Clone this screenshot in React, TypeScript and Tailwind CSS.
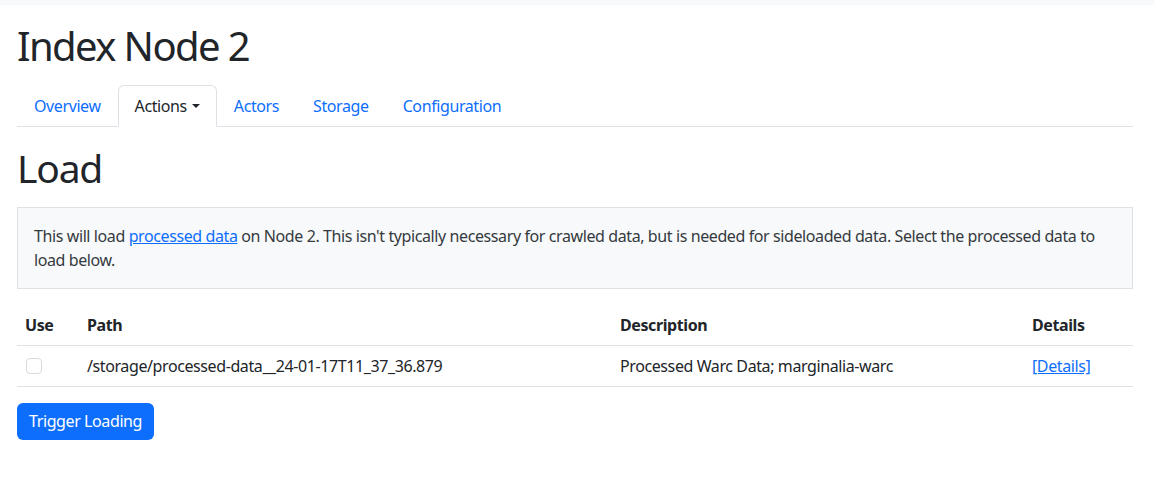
import React from "react";

export default function App() {
  const font = { fontFamily: '"Noto Sans", "Open Sans", sans-serif' };
  return (
    <div className="min-h-[479px] bg-white text-[#212529] tracking-[-0.4px]" style={font}>
      <div className="h-[5px] bg-[#f8f9fa]" />
      <div className="pl-[17px] pr-[21px]">
        <h1 className="mt-[17px] text-[40px] leading-[48px] font-normal tracking-[-1.6px]">Index Node 2</h1>
        <nav className="mt-[15px] flex border-b border-[#dee2e6] text-[16px] leading-6">
          <a className="px-4 py-2 text-[#0d6efd] border border-transparent -mb-px">Overview</a>
          <a className="px-4 py-2 text-[#212529] border border-[#dee2e6] border-b-white rounded-t-md -mb-px bg-white flex items-center">
            Actions
            <span className="ml-[5px] inline-block w-0 h-0 border-l-[4px] border-r-[4px] border-t-[4px] border-l-transparent border-r-transparent border-t-[#212529]" />
          </a>
          <a className="px-4 py-2 text-[#0d6efd] border border-transparent -mb-px">Actors</a>
          <a className="px-4 py-2 text-[#0d6efd] border border-transparent -mb-px">Storage</a>
          <a className="px-4 py-2 text-[#0d6efd] border border-transparent -mb-px">Configuration</a>
        </nav>
        <h2 className="mt-[18px] text-[39px] leading-[46px] font-normal tracking-[-1.2px]">Load</h2>
        <div className="mt-[16px] border border-[#dee2e6] bg-[#f8f9fa] px-4 py-4 text-[16px] leading-6 text-[#343a40]">
          This will load <a className="text-[#0d6efd] underline">processed data</a> on Node 2. This isn't typically necessary for crawled data, but is needed for sideloaded data. Select the processed data to load below.
        </div>
        <table className="mt-[16px] w-full text-[16px] leading-6 border-collapse">
          <thead>
            <tr className="border-b border-[#dee2e6]">
              <th className="text-left font-bold px-2 py-2 w-[62px]">Use</th>
              <th className="text-left font-bold px-2 py-2 w-[533px]">Path</th>
              <th className="text-left font-bold px-2 py-2 w-[412px]">Description</th>
              <th className="text-left font-bold px-2 py-2">Details</th>
            </tr>
          </thead>
          <tbody>
            <tr className="border-b border-[#dee2e6]">
              <td className="px-2 py-2">
                <span className="block ml-[1px] w-4 h-4 border border-[#d8dbde] rounded-[4px]" />
              </td>
              <td className="px-2 py-2">/storage/processed-data__24-01-17T11_37_36.879</td>
              <td className="px-2 py-2">Processed Warc Data; marginalia-warc</td>
              <td className="px-2 py-2">
                <a className="text-[#0d6efd] underline">[Details]</a>
              </td>
            </tr>
          </tbody>
        </table>
        <button className="mt-[16px] bg-[#0d6efd] text-white rounded-md px-3 py-[7px] text-[16px] leading-[23px]">
          Trigger Loading
        </button>
      </div>
    </div>
  );
}
